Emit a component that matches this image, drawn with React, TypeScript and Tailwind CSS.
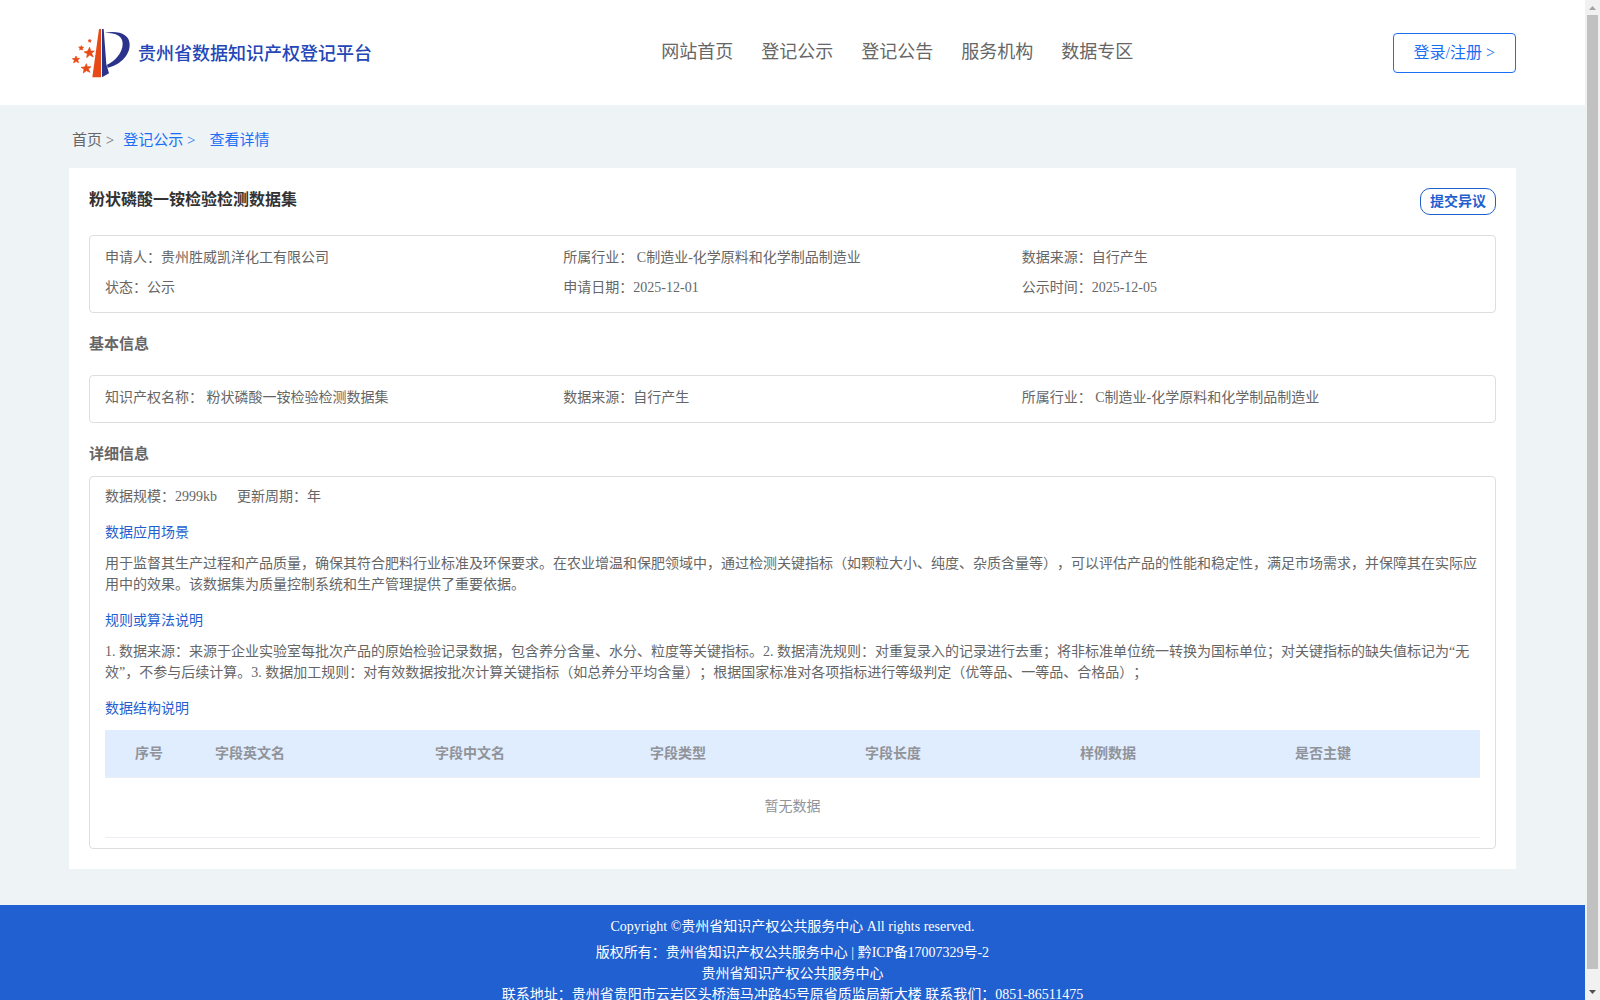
import React from 'react';

const NAV_ITEMS = ['网站首页', '登记公示', '登记公告', '服务机构', '数据专区'];

const SUMMARY = [
    { label: '申请人：', value: '贵州胜威凯洋化工有限公司' },
    { label: '所属行业：', value: ' C制造业-化学原料和化学制品制造业' },
    { label: '数据来源：', value: '自行产生' },
    { label: '状态：', value: '公示' },
    { label: '申请日期：', value: '2025-12-01' },
    { label: '公示时间：', value: '2025-12-05' },
];

const BASIC_INFO = [
    { label: '知识产权名称：', value: ' 粉状磷酸一铵检验检测数据集' },
    { label: '数据来源：', value: '自行产生' },
    { label: '所属行业：', value: ' C制造业-化学原料和化学制品制造业' },
];

const COLUMNS = [
    { title: '字段英文名', width: 'w-[220px]' },
    { title: '字段中文名', width: 'w-[215px]' },
    { title: '字段类型', width: 'w-[215px]' },
    { title: '字段长度', width: 'w-[215px]' },
    { title: '样例数据', width: 'w-[215px]' },
    { title: '是否主键', width: 'w-[195px]' },
];

const Logo: React.FC = () => (
    <svg viewBox="0 0 174 150" className="w-[58px] h-[50px]" aria-hidden="true">
        <path d="M81 3h6v145H61z" fill="#e84a17" />
        <path d="M90 3h5l8 106 8 27-21 12z" fill="#2a3389" />
        <path d="M98 14c44-7 75 5 75 36 0 34-32 62-66 69l-2-9c24-9 47-37 47-62 0-24-18-34-54-34z" fill="#2a3389" />
        <g fill="#e84a17" stroke="#e84a17" strokeWidth="2" strokeLinejoin="round">
            <path d="M53 58l3 11 11 0-8 7 5 11-11-6-9 8 2-12-10-5 11-3z" />
            <path d="M43 107l3 9 11 0-8 7 5 10-11-5-9 7 2-11-9-6 11-1z" />
            <path d="M12 84l3 7 8 0-6 5 3 8-8-4-7 5 2-8-6-5 8-1z" />
            <path d="M28 53l2 4 5 1-4 3 1 5-5-2-4 2 1-5-4-4 6 0z" />
            <path d="M54 34l1 3 3 1-2 2 0 3-3-2-3 1 1-3-2-3 4 0z" />
        </g>
    </svg>
);

const InfoGrid: React.FC<{ items: { label: string; value: string }[] }> = ({ items }) => (
    <dl className="grid grid-cols-3 rounded border border-[#dedede] px-[15px] pt-[7px] pb-[9px] leading-[30px]">
        {items.map((item) => (
            <div key={item.label} className="flex whitespace-pre">
                <dt>{item.label}</dt>
                <dd>{item.value}</dd>
            </div>
        ))}
    </dl>
);

const ScrollTrack: React.FC = () => (
    <div className="w-[15px] shrink-0 flex flex-col items-center bg-[#f1f1f1]" aria-hidden="true">
        <svg viewBox="0 0 15 15" className="w-[15px] h-[15px]">
            <path d="M4 10h7L7.500 6z" fill="#a3a3a3" />
        </svg>
        <div className="w-[11px] flex-1 bg-[#c1c1c1]" />
        <svg viewBox="0 0 15 31" className="w-[15px] h-[31px]">
            <path d="M4 21h7l-3.500 4z" fill="#505050" />
        </svg>
    </div>
);

export default function App() {
    return (
        <div className="h-screen flex overflow-hidden [text-spacing-trim:space-all] font-['Liberation_Serif','Noto_Sans_CJK_SC',serif] text-sm text-[#666]">
            <div className="flex-1 min-w-0 overflow-hidden bg-[#eef3f6]">
                <header className="h-[105px] flex items-center justify-between bg-white px-[69px]">
                    <a href="#" className="flex items-center gap-2 pl-[3px] text-lg leading-6 font-medium text-[#2446b8]">
                        <Logo />
                        <span className="pt-[2px]">贵州省数据知识产权登记平台</span>
                    </a>
                    <nav className="flex gap-7 pb-[2px] pl-[30px] text-lg">
                        {NAV_ITEMS.map((item) => (
                            <a key={item} href="#">
                                {item}
                            </a>
                        ))}
                    </nav>
                    <button className="h-10 px-5 rounded border border-[#1a6ff5] text-base text-[#1a6ff5]">
                        登录/注册 &gt;
                    </button>
                </header>

                <main className="px-[69px] pb-9">
                    <nav className="flex h-[63px] items-center gap-[9px] pl-[3px] pt-[9px] text-[15px]">
                        <a href="#">首页 &gt;</a>
                        <a href="#" className="text-[#1a6ff5]">登记公示 &gt;</a>
                        <span className="pl-[5px] text-[#1a6ff5]">查看详情</span>
                    </nav>

                    <section className="bg-white p-5">
                        <div className="flex h-[47px] items-start justify-between">
                            <h1 className="text-base leading-6 font-bold text-[#333]">粉状磷酸一铵检验检测数据集</h1>
                            <button className="h-[27px] px-[9px] rounded-[10px] border border-[#1f5fd0] font-bold text-[#1f5fd0]">
                                提交异议
                            </button>
                        </div>
                        <InfoGrid items={SUMMARY} />

                        <h2 className="pt-[21px] pb-[21px] text-[15px] leading-5 font-bold">基本信息</h2>
                        <InfoGrid items={BASIC_INFO} />

                        <h2 className="pt-[21px] pb-3 text-[15px] leading-5 font-bold">详细信息</h2>
                        <div className="rounded border border-[#dedede] px-[15px] pt-[9px] pb-[10px] leading-[21px]">
                            <div className="flex gap-5">
                                <span>数据规模：2999kb</span>
                                <span>更新周期：年</span>
                            </div>

                            <h3 className="pt-[15px] pb-[10px] text-[#1f5fd0]">数据应用场景</h3>
                            <p>
                                用于监督其生产过程和产品质量，确保其符合肥料行业标准及环保要求。在农业增温和保肥领域中，通过检测关键指标（如颗粒大小、纯度、杂质含量等），可以评估产品的性能和稳定性，满足市场需求，并保障其在实际应用中的效果。该数据集为质量控制系统和生产管理提供了重要依据。
                            </p>

                            <h3 className="pt-[15px] pb-[10px] text-[#1f5fd0]">规则或算法说明</h3>
                            <p>
                                1. 数据来源：来源于企业实验室每批次产品的原始检验记录数据，包含养分含量、水分、粒度等关键指标。2. 数据清洗规则：对重复录入的记录进行去重；将非标准单位统一转换为国标单位；对关键指标的缺失值标记为“无效”，不参与后续计算。3. 数据加工规则：对有效数据按批次计算关键指标（如总养分平均含量）；根据国家标准对各项指标进行等级判定（优等品、一等品、合格品）；
                            </p>

                            <h3 className="pt-[15px] pb-[11px] text-[#1f5fd0]">数据结构说明</h3>
                            <table className="w-full table-fixed text-left text-[#909399]">
                                <thead className="bg-[#e0edff]">
                                    <tr className="h-[47px] border-b border-[#ebeef5]">
                                        <th className="w-[100px] pr-3 text-center">序号</th>
                                        {COLUMNS.map((col) => (
                                            <th key={col.title} className={`${col.width} px-[10px]`}>
                                                {col.title}
                                            </th>
                                        ))}
                                    </tr>
                                </thead>
                                <tbody>
                                    <tr className="h-[60px] border-b border-[#ebeef5]">
                                        <td colSpan={7} className="pb-[2px] text-center">暂无数据</td>
                                    </tr>
                                </tbody>
                            </table>
                        </div>
                    </section>
                </main>

                <footer className="bg-[#2160d0] pt-[11px] pb-6 text-center leading-[21px] text-white">
                    <p className="pb-[5px]">Copyright ©贵州省知识产权公共服务中心 All rights reserved.</p>
                    <p>
                        版权所有：贵州省知识产权公共服务中心 | <a href="#">黔ICP备17007329号-2</a>
                    </p>
                    <p>贵州省知识产权公共服务中心</p>
                    <p>联系地址：贵州省贵阳市云岩区头桥海马冲路45号原省质监局新大楼 联系我们：0851-86511475</p>
                </footer>
            </div>
            <ScrollTrack />
        </div>
    );
}
